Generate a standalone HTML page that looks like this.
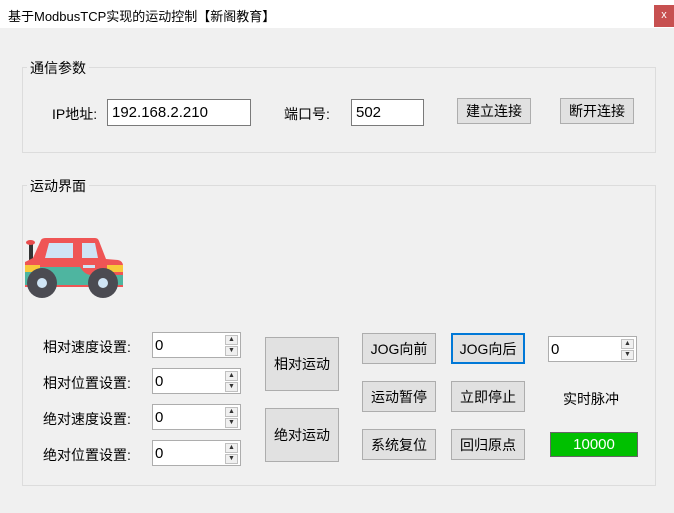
<!DOCTYPE html>
<html><head><meta charset="utf-8"><style>
*{box-sizing:border-box;margin:0;padding:0}
body{width:674px;height:513px;background:#f0f0f0;position:relative;overflow:hidden;font-family:"Liberation Sans","Noto Sans CJK SC",sans-serif;font-size:14px;color:#000}
.a{position:absolute}
.title{left:0;top:0;width:674px;height:28px;background:#fff}
.close{left:654px;top:5px;width:20px;height:22px;background:#c75050;color:#fff;font-size:11px;text-align:center;line-height:20px}
.grp{border:1px solid #dcdcdc}
.lbl{background:#f0f0f0;padding:0 3px;font-size:14px;line-height:16px}
.inp{background:#fff;border:1px solid #7a7a7a;font-size:15px;padding-left:4px;display:flex;align-items:center}
.btn{background:#e1e1e1;border:1px solid #adadad;display:flex;align-items:center;justify-content:center;font-size:14px}
.spin{background:#fff;border:1px solid #adadad;font-size:15px;padding-left:2px;display:flex;align-items:center}
.sb{position:absolute;right:2px;width:13px;height:10px;background:#f0f0f0;border:1px solid #c0c0c0;font-size:7px;line-height:8px;text-align:center;color:#333}
</style></head><body>
<div class="a title"></div>
<div class="a" style="left:8px;top:6px;font-size:13px">基于ModbusTCP实现的运动控制【新阁教育】</div>
<div class="a close">x</div>

<div class="a grp" style="left:22px;top:67px;width:634px;height:86px"></div>
<div class="a lbl" style="left:27px;top:60px">通信参数</div>
<div class="a" style="left:52px;top:104px">IP地址:</div>
<div class="a inp" style="left:107px;top:99px;width:144px;height:27px">192.168.2.210</div>
<div class="a" style="left:284px;top:104px">端口号:</div>
<div class="a inp" style="left:351px;top:99px;width:73px;height:27px">502</div>
<div class="a btn" style="left:457px;top:98px;width:74px;height:26px">建立连接</div>
<div class="a btn" style="left:560px;top:98px;width:74px;height:26px">断开连接</div>

<div class="a grp" style="left:22px;top:185px;width:634px;height:301px"></div>
<div class="a lbl" style="left:27px;top:178px">运动界面</div>

<svg class="a" style="left:0;top:0" width="674" height="513" viewBox="0 0 674 513">
<rect x="29" y="243" width="4" height="20" fill="#333"/>
<ellipse cx="30.5" cy="242.5" rx="4.5" ry="2.5" fill="#e84c4c"/>
<path d="M25 262 L33 258 L41 240 Q42 238 46 238 L95 238 Q98 238 99 241 L106 259 L118 260 Q123 261 123 266 L123 287 L25 287 Z" fill="#ef5555"/>
<path d="M25 267 L80 267 Q84 274 90 275 L123 275 L123 285 L25 285 Z" fill="#4eb5a0"/>
<rect x="25" y="265" width="15" height="7" fill="#f8c93a"/>
<rect x="107" y="265" width="16" height="7" fill="#f8c93a"/>
<path d="M45 258 L49 243 L73 243 L73 258 Z" fill="#cfe4f5"/>
<path d="M82 243 L95 243 L98 258 L82 258 Z" fill="#cfe4f5"/>
<rect x="83" y="265" width="12" height="3" fill="#cfe4f5"/>
<circle cx="42" cy="283" r="15" fill="#4b4b52"/><circle cx="42" cy="283" r="5" fill="#cfe4f5"/>
<circle cx="103" cy="283" r="15" fill="#4b4b52"/><circle cx="103" cy="283" r="5" fill="#cfe4f5"/>
</svg>

<div class="a" style="left:43px;top:337px">相对速度设置:</div>
<div class="a" style="left:43px;top:373px">相对位置设置:</div>
<div class="a" style="left:43px;top:409px">绝对速度设置:</div>
<div class="a" style="left:43px;top:445px">绝对位置设置:</div>

<div class="a spin" style="left:152px;top:332px;width:89px;height:26px">0<div class="sb" style="top:2px">▲</div><div class="sb" style="top:13px">▼</div></div>
<div class="a spin" style="left:152px;top:368px;width:89px;height:26px">0<div class="sb" style="top:2px">▲</div><div class="sb" style="top:13px">▼</div></div>
<div class="a spin" style="left:152px;top:404px;width:89px;height:26px">0<div class="sb" style="top:2px">▲</div><div class="sb" style="top:13px">▼</div></div>
<div class="a spin" style="left:152px;top:440px;width:89px;height:26px">0<div class="sb" style="top:2px">▲</div><div class="sb" style="top:13px">▼</div></div>

<div class="a btn" style="left:265px;top:337px;width:74px;height:54px">相对运动</div>
<div class="a btn" style="left:265px;top:408px;width:74px;height:54px">绝对运动</div>

<div class="a btn" style="left:362px;top:333px;width:74px;height:31px">JOG向前</div>
<div class="a btn" style="left:451px;top:333px;width:74px;height:31px;border:2px solid #0078d7">JOG向后</div>
<div class="a btn" style="left:362px;top:381px;width:74px;height:31px">运动暂停</div>
<div class="a btn" style="left:451px;top:381px;width:74px;height:31px">立即停止</div>
<div class="a btn" style="left:362px;top:429px;width:74px;height:31px">系统复位</div>
<div class="a btn" style="left:451px;top:429px;width:74px;height:31px">回归原点</div>

<div class="a spin" style="left:548px;top:336px;width:89px;height:26px">0<div class="sb" style="top:2px">▲</div><div class="sb" style="top:13px">▼</div></div>
<div class="a" style="left:563px;top:389px">实时脉冲</div>
<div class="a" style="left:550px;top:432px;width:88px;height:25px;background:#00c000;border:1px solid #666;color:#fff;font-size:15px;text-align:center;line-height:23px">10000</div>
</body></html>
